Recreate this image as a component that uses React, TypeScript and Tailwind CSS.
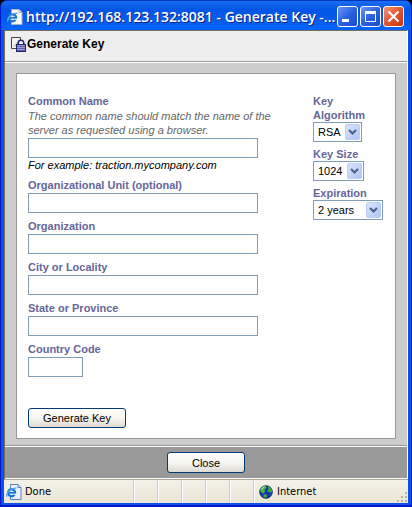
import { useState } from 'react'
import type { ReactNode } from 'react'

const buttonClass =
  'rounded-[3px] border border-[#003c74] bg-linear-to-b from-white via-[#f6f5f1] to-[#dedbd2] text-[11px] leading-4 text-black'

interface TextFieldProps {
  id: string
  label: string
  hint?: string
  example?: string
  short?: boolean
}

function TextField({ id, label, hint, example, short }: TextFieldProps) {
  return (
    <div>
      <label htmlFor={id} className="block font-bold text-[#666699]">
        {label}
      </label>
      {hint && <p className="-mr-5 mt-px italic text-[#666666]">{hint}</p>}
      <input
        id={id}
        type="text"
        className={`mt-px block h-5 border border-[#7f9db9] bg-white px-1 text-black outline-none ${short ? 'w-[55px]' : 'w-full'}`}
      />
      {example && <p className="mt-px leading-[13px] italic text-black">{example}</p>}
    </div>
  )
}

interface SelectFieldProps {
  id: string
  label: string
  options: string[]
  initial: string
  width: string
}

function SelectField({ id, label, options, initial, width }: SelectFieldProps) {
  const [value, setValue] = useState(initial)

  return (
    <div>
      <label htmlFor={id} className="block font-bold text-[#666699]">
        {label}
      </label>
      <div className={`relative ${width}`}>
        <select
          id={id}
          value={value}
          onChange={(e) => setValue(e.target.value)}
          className="block h-5 w-full appearance-none border border-[#7f9db9] bg-white pl-1 text-black outline-none"
        >
          {options.map((option) => (
            <option key={option}>{option}</option>
          ))}
        </select>
        <svg
          viewBox="0 0 15 16"
          className="pointer-events-none absolute top-0.5 right-0.5 h-4 w-[15px]"
          aria-hidden="true"
        >
          <defs>
            <linearGradient id={`${id}-arrow`} x1="0" y1="0" x2="1" y2="1">
              <stop offset="0" stopColor="#dbe6fe" />
              <stop offset="1" stopColor="#afc4f6" />
            </linearGradient>
          </defs>
          <rect x="0.5" y="0.5" width="14" height="15" rx="1.5" fill={`url(#${id}-arrow)`} stroke="#bccdf5" />
          <path d="M4 6l3.5 3.5L11 6" fill="none" stroke="#4d6185" strokeWidth="2.2" />
        </svg>
      </div>
    </div>
  )
}

interface PageIconProps {
  paper: string
  edge: string
}

function PageIcon({ paper, edge }: PageIconProps) {
  return (
    <svg viewBox="0 0 16 16" className="h-4 w-4 shrink-0" aria-hidden="true">
      <path d="M4.5 0.5h7.5l3 3v12h-10.5z" fill={paper} stroke={edge} />
      <path d="M12 0.5v3h3" fill="#d9dde8" stroke={edge} />
      <circle cx="5.6" cy="8.8" r="3.5" fill="#e9f4ff" stroke="#1b74d2" strokeWidth="2.2" />
      <path d="M3 8.8h6.5" stroke="#1b74d2" strokeWidth="1.7" />
      <path d="M7.6 10.3h3" stroke={paper} strokeWidth="1.3" />
      <path d="M0.8 12.6C-0.5 9 6 3.2 10.6 4.2" fill="none" stroke="#4fa8ee" strokeWidth="1.2" />
    </svg>
  )
}

function KeyPageIcon() {
  return (
    <svg viewBox="0 0 15 15" className="h-[15px] w-[15px]" aria-hidden="true">
      <path d="M0.5 0.5h9v11h-9z" fill="#f3f3f3" stroke="#444" />
      <path d="M2 9.5L8 2v8z" fill="#ccc" />
      <path d="M7.2 8V6a2.8 2.8 0 0 1 5.6 0V8" fill="#eee" stroke="#202070" strokeWidth="1.5" />
      <rect x="5.5" y="7.5" width="9" height="7" fill="#9c9cd6" stroke="#202070" />
      <path d="M6 9.5h8M6 11.5h8M6 13.5h8" stroke="#44449c" strokeWidth="0.7" />
    </svg>
  )
}

function GlobeIcon() {
  return (
    <svg viewBox="0 0 14 14" className="h-[14px] w-[14px]" aria-hidden="true">
      <circle cx="7" cy="7" r="6.3" fill="#1531b4" stroke="#101c50" strokeWidth="0.8" />
      <path d="M1.2 6.5Q1.5 1 7 1L7.5 3 5.5 4.5 6 7 4 8.5z" fill="#46bd3c" />
      <path d="M8.5 1.2Q12 2 13 5.5L12.5 8 10.5 7 8 6.5 9.5 3.5z" fill="#3cae38" />
      <path d="M4.5 9.3l2.8.2 1 1.3-1.3 2.2-2.8-1.3z" fill="#3cae38" />
      <path d="M10 9.5l2-.8-1.5 2.6z" fill="#217522" />
      <path d="M2.5 4.5Q3.5 2.5 5.5 2" fill="none" stroke="#b9f3a0" strokeWidth="1" />
    </svg>
  )
}

interface CaptionButtonProps {
  label: string
  color: string
  children: ReactNode
}

function CaptionButton({ label, color, children }: CaptionButtonProps) {
  return (
    <button
      type="button"
      aria-label={label}
      className={`h-[21px] w-[21px] shrink-0 rounded-[3px] border border-white bg-linear-to-br ${color}`}
    >
      <svg viewBox="0 0 19 19" className="h-[19px] w-[19px]" aria-hidden="true">
        {children}
      </svg>
    </button>
  )
}

function TitleBar() {
  const blue = 'from-[#6a97f4] via-[#2b60e0] to-[#1a4ad0]'

  return (
    <header className="flex h-[30px] items-center justify-between rounded-t-md border-t border-[#0a35b8] bg-linear-to-b from-[#1a6df5] via-[#0455e4] via-30% to-[#0464fa] pt-[2px] pr-[7px] pl-[6px]">
      <div className="flex min-w-0 items-center gap-[3px]">
        <PageIcon paper="#fbfaf3" edge="#a8b3c8" />
        <h1 className="font-['Open_Sans','Noto_Sans',sans-serif] text-[14px] leading-5 font-semibold whitespace-nowrap text-white [text-shadow:1px_1px_0_#0f1f8c]">
          http://192.168.123.132:8081 - Generate Key -...
        </h1>
      </div>
      <div className="flex gap-0.5">
        <CaptionButton label="Minimize" color={blue}>
          <path d="M4 13.5h7" stroke="white" strokeWidth="3" />
        </CaptionButton>
        <CaptionButton label="Maximize" color={blue}>
          <path d="M4.5 5v9.5h10V5" fill="none" stroke="white" />
          <path d="M4 5.5h11" stroke="white" strokeWidth="3" />
        </CaptionButton>
        <CaptionButton label="Close window" color="from-[#f0937a] via-[#e2532f] to-[#c8340c]">
          <path d="M4.5 4.5l10 10M14.5 4.5l-10 10" stroke="white" strokeWidth="2.2" />
        </CaptionButton>
      </div>
    </header>
  )
}

function StatusBar() {
  const cell = 'border-l border-l-[#cfccba] shadow-[inset_1px_0_0_#fff]'

  return (
    <footer className="flex h-6 border-t border-[#aca899] bg-linear-to-b from-[#f4f2e8] to-[#e9e6d5] font-['DejaVu_Sans_Condensed','DejaVu_Sans',sans-serif] text-[11px] leading-[22px] text-black">
      <div className="flex flex-1 items-center gap-[3px] pt-px pl-0.5">
        <PageIcon paper="#eaf1ff" edge="#5a80c8" />
        <span>Done</span>
      </div>
      <div className={`w-6 ${cell}`} />
      <div className={`w-6 ${cell}`} />
      <div className={`w-6 ${cell}`} />
      <div className={`w-6 ${cell}`} />
      <div className={`w-6 ${cell}`} />
      <div className={`flex w-[155px] items-center justify-between pt-px pl-[5px] ${cell}`}>
        <div className="flex items-center gap-1">
          <GlobeIcon />
          <span>Internet</span>
        </div>
        <svg viewBox="0 0 12 12" className="h-3 w-3 self-end" aria-hidden="true">
          <path d="M9 1h2v2H9zM5 5h2v2H5zM9 5h2v2H9zM1 9h2v2H1zM5 9h2v2H5zM9 9h2v2H9z" fill="#b8b4a3" />
        </svg>
      </div>
    </footer>
  )
}

export default function App() {
  return (
    <div className="min-h-screen bg-black">
      <div className="flex min-h-screen flex-col rounded-t-lg border-x border-b-2 border-[#0019cf] bg-[#0a4fe0] font-['Liberation_Sans',sans-serif]">
        <TitleBar />
        <div className="flex flex-1 flex-col border-x-3 border-b-2 border-[#0c50e6]">
          <main className="flex flex-1 flex-col border-t border-r border-l border-t-[#716f64] border-r-white border-l-[#716f64] bg-[#cccccc] text-[11px] leading-[14px]">
            <div className="flex h-[31px] items-center gap-px border-b border-[#999999] bg-[#eeeeee] pb-1 pl-[6px]">
              <KeyPageIcon />
              <h2 className="text-[12px] font-bold text-black">Generate Key</h2>
            </div>

            <div className="flex flex-1 flex-col border-y border-t-white border-b-[#999999] px-[11px] pt-2.5 pb-1.5">
              <form
                onSubmit={(e) => e.preventDefault()}
                className="flex flex-1 flex-col border border-[#999999] bg-white pt-5 pr-3 pb-[10px] pl-[11px]"
              >
                <div className="flex justify-between">
                  <div className="flex w-[250px] flex-col gap-[6px] pr-5">
                    <TextField
                      id="common-name"
                      label="Common Name"
                      hint="The common name should match the name of the server as requested using a browser."
                      example="For example: traction.mycompany.com"
                    />
                    <TextField id="organizational-unit" label="Organizational Unit (optional)" />
                    <TextField id="organization" label="Organization" />
                    <TextField id="city" label="City or Locality" />
                    <TextField id="state" label="State or Province" />
                    <TextField id="country-code" label="Country Code" short />
                  </div>

                  <div className="flex w-[70px] flex-col gap-[5px]">
                    <SelectField
                      id="key-algorithm"
                      label="Key Algorithm"
                      options={['RSA', 'DSA']}
                      initial="RSA"
                      width="w-[49px]"
                    />
                    <SelectField
                      id="key-size"
                      label="Key Size"
                      options={['512', '1024', '2048']}
                      initial="1024"
                      width="w-[51px]"
                    />
                    <SelectField
                      id="expiration"
                      label="Expiration"
                      options={['1 year', '2 years', '5 years']}
                      initial="2 years"
                      width="w-[70px]"
                    />
                  </div>
                </div>

                <button type="submit" className={`mt-auto h-5 w-[98px] ${buttonClass}`}>
                  Generate Key
                </button>
              </form>
            </div>

            <div className="flex h-[33px] items-center justify-center border-y border-white bg-[#999999]">
              <button type="button" className={`h-[21px] w-[78px] ${buttonClass}`}>
                Close
              </button>
            </div>
          </main>
          <StatusBar />
        </div>
      </div>
    </div>
  )
}
